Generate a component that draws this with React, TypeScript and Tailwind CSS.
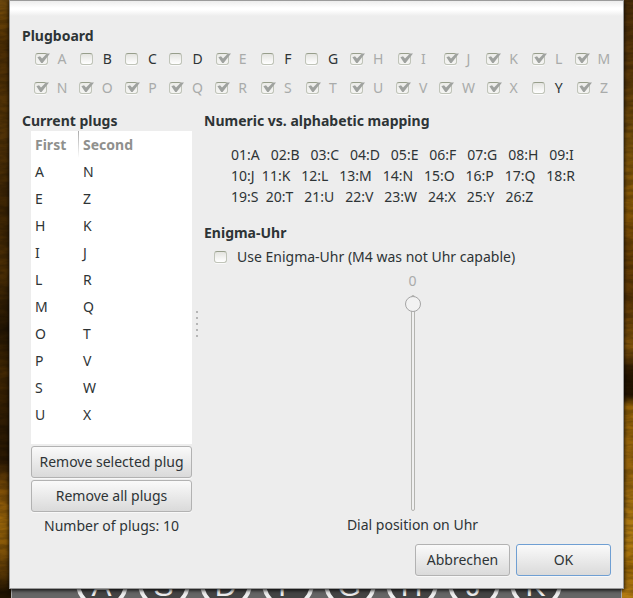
import { useState } from "react";

const ROWS = ["ABCDEFGHIJKLM", "NOPQRSTUVWXYZ"];
const INITIAL_PLUGS = ["AN", "EZ", "HK", "IJ", "LR", "MQ", "OT", "PV", "SW", "UX"];
const MAPPING = [
  "01:A   02:B   03:C   04:D   05:E   06:F   07:G   08:H   09:I",
  "10:J  11:K   12:L   13:M   14:N   15:O   16:P   17:Q   18:R",
  "19:S  20:T   21:U   22:V   23:W   24:X   25:Y   26:Z",
].join("\n");

type CheckProps = {
  label: string;
  checked: boolean;
  disabled?: boolean;
  onChange?: () => void;
};

function Check({ label, checked, disabled = false, onChange }: CheckProps) {
  return (
    <label className={`flex items-center gap-2.5 ${disabled ? "text-[#a9abaa]" : ""}`}>
      <span className="relative block size-[13px] shrink-0">
        <input
          type="checkbox"
          checked={checked}
          disabled={disabled}
          onChange={onChange}
          className="block h-3 w-[13px] appearance-none rounded-[3px] border border-[#c0c4b9] border-t-[#979e8b] bg-linear-to-b from-[#e4e4e0] to-white shadow-[0_1px_0_#fafafa] disabled:checked:from-[#ecece9] disabled:checked:to-[#f5f5f3]"
        />
        {checked && (
          <svg
            viewBox="0 0 14 13"
            className="pointer-events-none absolute top-0 left-0.5 h-[13px] w-3.5"
            aria-hidden="true"
          >
            <path d="M0.4 4.2 3 3.2 5 5.6 10 0.4 13 0.4 5.6 10 4.2 10Z" fill="#9fa29f" />
          </svg>
        )}
      </span>
      <span>{label}</span>
    </label>
  );
}

type PushProps = { children: string; onClick?: () => void; focused?: boolean; wide?: boolean };

function Push({ children, onClick, focused = false, wide = false }: PushProps) {
  return (
    <button
      type="button"
      onClick={onClick}
      className={`h-8 rounded-[3px] border bg-linear-to-b from-[#fafafa] to-[#dadada] shadow-[0_1px_0_#f8f8f8] ${
        wide ? "w-full" : "w-[95px]"
      } ${focused ? "border-[#6f9fd3]" : "border-[#b2b2b2]"}`}
    >
      {children}
    </button>
  );
}

function Backdrop() {
  return (
    <div className="absolute inset-0 overflow-hidden" aria-hidden="true">
      <div className="flex h-full justify-between">
        <div className="w-1/2 bg-[linear-gradient(180deg,#79500f_0%,#694206_3%,#4b2d04_8%,#553507_20%,#3d2504_35%,#4b2e05_45%,#241603_55%,#442903_62%,#2b1903_72%,#2b1903_77%,#805008_82%,#a06a0b_88%,#664006_95%,#211402_99%)]" />
        <div className="w-1/2 bg-[linear-gradient(180deg,#4c2f0a_0%,#5b3909_12%,#76500b_24%,#8a5a07_34%,#6b4105_42%,#5a3606_50%,#83550b_58%,#2b1902_62%,#211301_66%,#946207_68%,#96640d_78%,#b47e13_90%,#9d6907_95%,#b47c12_100%)]" />
      </div>
      <svg className="absolute inset-0 size-full opacity-20">
        <filter id="grain">
          <feTurbulence type="fractalNoise" baseFrequency="0.06 0.2" numOctaves="3" seed="8" />
          <feColorMatrix values="0 0 0 0 0  0 0 0 0 0  0 0 0 0 0  3 0 0 0 -1" />
        </filter>
        <rect width="100%" height="100%" filter="url(#grain)" />
      </svg>
    </div>
  );
}

function Keyboard() {
  return (
    <div
      className="relative mx-0.5 flex h-[9px] items-start justify-center gap-2.5 overflow-hidden border-x border-[#aaa] bg-[#666] pl-1 font-['Liberation_Sans',sans-serif]"
      aria-hidden="true"
    >
      {"ASDFGHJK".split("").map((key) => (
        <span
          key={key}
          className="-mt-8 flex size-[52px] shrink-0 items-end justify-center rounded-full border-4 border-[#eeeeee] bg-[#444] pb-1 text-[30px] leading-none text-[#eeeeee]"
        >
          {key}
        </span>
      ))}
    </div>
  );
}

export default function App() {
  const [plugs, setPlugs] = useState(INITIAL_PLUGS);
  const [selected, setSelected] = useState(-1);
  const [uhr, setUhr] = useState(false);
  const used = plugs.join("");

  return (
    <div className="relative min-h-screen bg-[#3d2504] px-[9px] font-['Noto_Sans','Open_Sans',sans-serif] text-sm leading-5 text-[#2e3436]">
      <Backdrop />
      <main className="relative z-10 flex flex-col border border-[#9b9b9b] bg-[#ededed] bg-[linear-gradient(180deg,#ededed_0px,#ffffff_7px,#ffffff_9px,#ededed_15px)] px-3 pt-[25px] pb-3 shadow-[0_1px_4px_#000]">
        <section>
          <h2 className="font-bold">Plugboard</h2>
          <div className="-mr-1 ml-1.5 mt-[3px] space-y-[9px]">
            {ROWS.map((row) => (
              <div key={row} className="grid grid-cols-13 justify-items-center">
                {row.split("").map((c) => (
                  <Check key={c} label={c} checked={used.includes(c)} disabled={used.includes(c)} onChange={() => {}} />
                ))}
              </div>
            ))}
          </div>
        </section>

        <div className="mt-[13px] flex">
          <section className="w-[170px]">
            <h2 className="font-bold">Current plugs</h2>
            <div className="ml-[9px]">
              <div className="h-[313px] bg-white">
                <table className="w-full table-fixed text-left">
                  <thead>
                    <tr className="h-[27px] text-[#8f908d]">
                      <th className="w-12 bg-linear-to-b from-[#aaaaaa] to-white bg-size-[1px_100%] bg-right bg-no-repeat pl-1">
                        First
                      </th>
                      <th className="pl-1">Second</th>
                    </tr>
                  </thead>
                  <tbody>
                    {plugs.map((p, i) => (
                      <tr key={p} onClick={() => setSelected(i)} className="h-[27px]">
                        <td className="pl-1">{p[0]}</td>
                        <td className="pl-1">{p[1]}</td>
                      </tr>
                    ))}
                  </tbody>
                </table>
              </div>
              <div className="mt-0.5 space-y-0.5">
                <Push wide onClick={() => setPlugs(plugs.filter((_, i) => i !== selected))}>
                  Remove selected plug
                </Push>
                <Push wide onClick={() => setPlugs([])}>
                  Remove all plugs
                </Push>
              </div>
              <p className="mt-1 text-center">Number of plugs: {plugs.length}</p>
            </div>
          </section>

          <div className="flex w-3 flex-col items-center justify-center gap-1 pr-0.5">
            {[0, 1, 2, 3, 4].map((n) => (
              <span key={n} className="size-0.5 bg-[#b5b5b5]" />
            ))}
          </div>

          <section className="-mr-2.5 flex flex-1 flex-col">
            <h2 className="font-bold">Numeric vs. alphabetic mapping</h2>
            <p className="mt-[13px] ml-[27px] leading-[21px] whitespace-pre">{MAPPING}</p>
            <h2 className="mt-4 font-bold">Enigma-Uhr</h2>
            <div className="mt-1 ml-2.5">
              <Check label="Use Enigma-Uhr (M4 was not Uhr capable)" checked={uhr} onChange={() => setUhr(!uhr)} />
            </div>
            <div className="mt-1 flex flex-1 flex-col items-center">
              <output htmlFor="dial" className="text-[#a9abaa]">
                0
              </output>
              <input
                id="dial"
                type="range"
                min={0}
                max={38}
                step={2}
                defaultValue={0}
                disabled={!uhr}
                className="mt-1 h-[216px] w-4 appearance-none bg-transparent [writing-mode:vertical-lr] [&::-webkit-slider-runnable-track]:h-full [&::-webkit-slider-runnable-track]:w-1 [&::-webkit-slider-runnable-track]:rounded-sm [&::-webkit-slider-runnable-track]:border [&::-webkit-slider-runnable-track]:border-[#b4b4b0] [&::-webkit-slider-runnable-track]:bg-[#f0f0f0] [&::-webkit-slider-thumb]:-ml-[7px] [&::-webkit-slider-thumb]:size-4 [&::-webkit-slider-thumb]:appearance-none [&::-webkit-slider-thumb]:rounded-full [&::-webkit-slider-thumb]:border [&::-webkit-slider-thumb]:border-[#a5a5a5] [&::-webkit-slider-thumb]:bg-[#f2f2f2]"
              />
              <label htmlFor="dial" className="mt-1">
                Dial position on Uhr
              </label>
            </div>
          </section>
        </div>

        <div className="mt-2 flex justify-end gap-1.5">
          <Push>Abbrechen</Push>
          <Push focused>OK</Push>
        </div>
      </main>
      <Keyboard />
    </div>
  );
}
